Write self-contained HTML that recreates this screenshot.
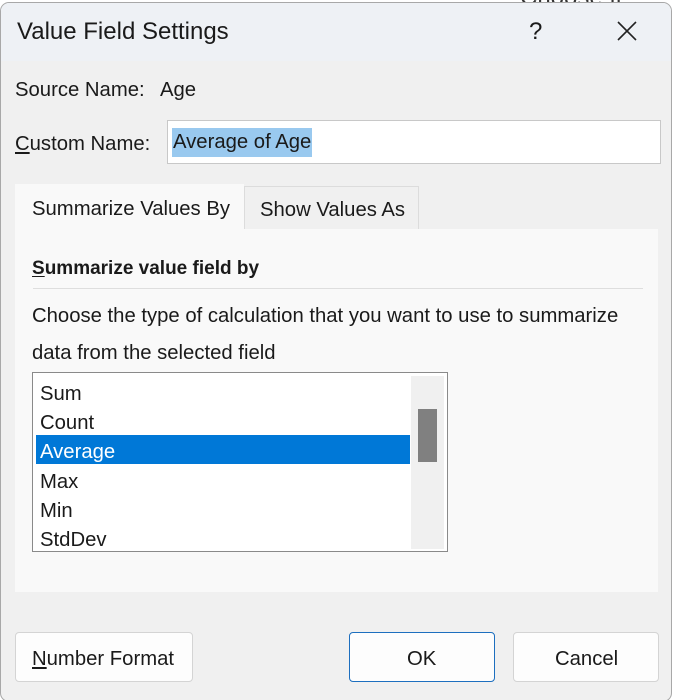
<!DOCTYPE html>
<html><head><meta charset="utf-8"><style>
*{box-sizing:border-box;margin:0;padding:0}
html,body{width:673px;height:700px;overflow:hidden}
body{background:#fff;font-family:"Liberation Sans",sans-serif;color:#1a1a1a;position:relative}
.dlg{position:absolute;left:0;top:2px;width:672px;height:700px;background:#f0f0f0;border:1px solid #a8a8a8;border-radius:9px;overflow:hidden}
.title{position:absolute;left:0;top:0;width:100%;height:58px;background:#eef1f5}
.a{position:absolute;white-space:nowrap}
.t{font-size:20.3px}
u{text-decoration:underline;text-underline-offset:2px}
</style></head><body>
<div class="a" style="left:520px;top:-16px;width:100px;overflow:hidden;font-size:24px;color:#333">Choose fields</div>
<div class="dlg">
<div class="title"></div>
<div class="a" style="left:16px;top:15px;font-size:24px">Value Field Settings</div>
<div class="a" style="left:528px;top:15px;font-size:24px">?</div>
<svg class="a" style="left:615px;top:17px" width="22" height="22"><path d="M2 2L20 20M20 2L2 20" stroke="#222" stroke-width="1.6"/></svg>
<div class="a t" style="left:14px;top:76px">Source Name:</div>
<div class="a t" style="left:159px;top:76px">Age</div>
<div class="a t" style="left:14px;top:130px"><u>C</u>ustom Name:</div>
<div class="a" style="left:166px;top:117px;width:494px;height:44px;background:#fff;border:1px solid #c8c8c8"></div>
<div class="a t" style="left:171px;top:125px;height:29px;line-height:29px;background:#99c9ef;padding:0 1px">Average of Age</div>
<div class="a" style="left:243px;top:183px;width:175px;height:44px;background:#f0f0f0;border:1px solid #dcdcdc;border-bottom:none"></div>
<div class="a t" style="left:259px;top:196px">Show Values As</div>
<div class="a" style="left:14px;top:226px;width:643px;height:363px;background:#f9f9f9"></div>
<div class="a" style="left:14px;top:181px;width:229px;height:48px;background:#f9f9f9"></div>
<div class="a t" style="left:31px;top:195px">Summarize Values By</div>
<div class="a t" style="left:31px;top:255px;font-weight:bold;font-size:19px"><u>S</u>ummarize value field by</div>
<div class="a" style="left:32px;top:285px;width:610px;height:1px;background:#dedede"></div>
<div class="a t" style="left:31px;top:302px">Choose the type of calculation that you want to use to summarize</div>
<div class="a t" style="left:31px;top:339px">data from the selected field</div>
<div class="a" style="left:31px;top:369px;width:416px;height:180px;background:#fff;border:1px solid #8a8a8a"></div>
<div class="a" style="left:35px;top:432px;width:374px;height:29px;background:#0078d7"></div>
<div class="a" style="left:410px;top:373px;width:33px;height:173px;background:#f0f0f0"></div>
<div class="a" style="left:417px;top:406px;width:19px;height:53px;background:#808080"></div>
<div class="a t" style="left:39px;top:380px">Sum</div>
<div class="a t" style="left:39px;top:409px">Count</div>
<div class="a t" style="left:39px;top:438px;color:#fff">Average</div>
<div class="a t" style="left:39px;top:468px">Max</div>
<div class="a t" style="left:39px;top:497px">Min</div>
<div class="a t" style="left:39px;top:526px">StdDev</div>
<div class="a" style="left:14px;top:629px;width:178px;height:50px;background:#fdfdfd;border:1px solid #d4d4d4;border-radius:4px"></div>
<div class="a t" style="left:31px;top:645px"><u>N</u>umber Format</div>
<div class="a" style="left:348px;top:629px;width:146px;height:50px;background:#fdfdfd;border:1px solid #1d6fbf;border-radius:4px"></div>
<div class="a t" style="left:406px;top:645px">OK</div>
<div class="a" style="left:512px;top:629px;width:146px;height:50px;background:#fdfdfd;border:1px solid #d4d4d4;border-radius:4px"></div>
<div class="a t" style="left:554px;top:645px">Cancel</div>
</div>
</body></html>
